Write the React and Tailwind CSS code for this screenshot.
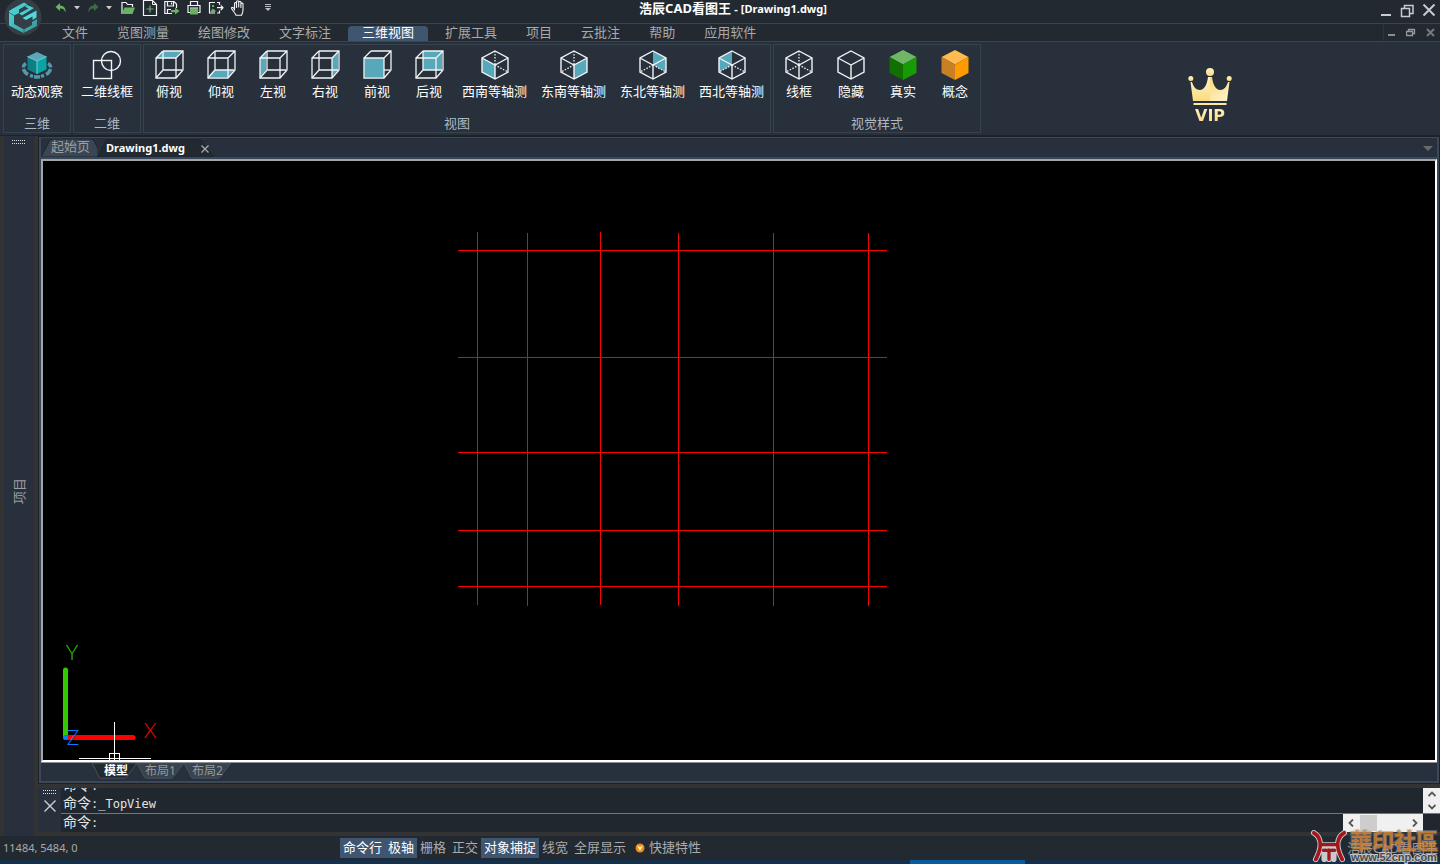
import React from 'react';

const WHITE = '#f2f4f5';
const TEAL = '#56a8ba';

/* ---------- ribbon icons ---------- */

const boxFaces = {
  top: 'M7 1H27L21 8H1Z',
  bottom: 'M7 20H27L21 27H1Z',
  left: 'M1 8L7 1V20L1 27Z',
  right: 'M21 8L27 1V20L21 27Z',
  front: 'M1 8H21V27H1Z',
  back: 'M8 1H27V20H8Z',
};

function BoxIcon({ face }) {
  return (
    <svg width="30" height="30" viewBox="-1 0 30 30" fill="none" stroke={WHITE} strokeWidth="1.3">
      <path d={boxFaces[face]} fill={TEAL} stroke="none" />
      {face !== 'front' && <path d="M8 1V20H27M8 20L1 28" />}
      {face === 'front' && <path d="M21 20H27" />}
      <path d="M8 1H28V20L21 28H1V8H21V28M1 8L8 1M21 8L28 1" />
    </svg>
  );
}

const isoFaces = {
  sw: 'M1 8L14 15V29L1 22Z',
  se: 'M27 8L14 15V29L27 22Z',
  ne: 'M14 1L27 8V22L14 15Z',
  nw: 'M14 1L1 8V22L14 15Z',
};

function IsoIcon({ face, hidden = true }) {
  return (
    <svg width="28" height="30" viewBox="0 0 28 30" fill="none" stroke={WHITE} strokeWidth="1.4">
      {face && <path d={isoFaces[face]} fill={TEAL} stroke="none" />}
      <path d="M14 1L27 8V22L14 29L1 22V8ZM1 8L14 15L27 8M14 15V29" />
      {hidden && (
        <g strokeDasharray="1.5 1.5" strokeWidth="1.3">
          {face !== 'ne' && face !== 'nw' && <path d="M14 1V15" />}
          {face !== 'sw' && <path d="M14 15L1 22" />}
          {face !== 'se' && <path d="M14 15L27 22" />}
        </g>
      )}
    </svg>
  );
}

function SolidCube({ top, left, right }) {
  return (
    <svg width="28" height="30" viewBox="0 0 28 30">
      <path d="M14 0L27.5 7L14 14.5L0.5 7Z" fill={top} />
      <path d="M0.5 7L14 14.5V30L0.5 23Z" fill={left} />
      <path d="M27.5 7L14 14.5V30L27.5 23Z" fill={right} />
    </svg>
  );
}

function OrbitIcon() {
  return (
    <svg width="32" height="30" viewBox="0 0 32 30">
      <g fill="none" stroke="#4f9aab" strokeWidth="3.4">
        <path d="M5 13.500C3 14.500 2.400 16 2.400 17.500" />
        <path d="M2.500 19C3 21 4.500 23 7 24.500" />
        <path d="M9 25.400L12 26.500" />
        <path d="M13 26.800C15 27.100 17 27.100 19 26.800" />
        <path d="M20 26.500L23 25.400" />
        <path d="M25 24.500C27.500 23 29 21 29.500 19" />
        <path d="M29.600 17.500C29.600 16 29 14.500 27 13.500" />
      </g>
      <path d="M16 2L25.500 6.500L16 11L6.500 6.500Z" fill="#5aa7b8" />
      <path d="M6.500 6.500L16 11V24L6.500 19.500Z" fill="#0c8084" />
      <path d="M25.500 6.500L16 11V24L25.500 19.500Z" fill="#0aa3a8" />
      <path d="M6.500 6.500L16 11L25.500 6.500M16 11V24" fill="none" stroke="#6fd6dd" strokeWidth="1" />
    </svg>
  );
}

function WireIcon() {
  return (
    <svg width="30" height="30" viewBox="0 0 30 30" fill="none" stroke={WHITE} strokeWidth="1.4">
      <rect x="1.500" y="10.500" width="18" height="18" />
      <circle cx="19" cy="11" r="9.500" />
    </svg>
  );
}

/* ---------- quick access icons ---------- */

function Caret({ color = '#c9cdd0' }) {
  return (
    <svg width="6" height="4" viewBox="0 0 6 4">
      <path d="M0 0H6L3 3.500Z" fill={color} />
    </svg>
  );
}

function UndoIcon() {
  return (
    <svg width="12" height="10" viewBox="0 0 12 10">
      <path d="M5 0L0.500 4L5 8V5.500C8 5.300 9.500 6.500 10.500 9.500C11 5.500 9 2.700 5 2.500Z" fill="#67b35f" />
    </svg>
  );
}

function RedoIcon() {
  return (
    <svg width="12" height="10" viewBox="0 0 12 10">
      <path d="M7 0L11.500 4L7 8V5.500C4 5.300 2.500 6.500 1.500 9.500C1 5.500 3 2.700 7 2.500Z" fill="#3f6b45" />
    </svg>
  );
}

function OpenIcon() {
  return (
    <svg width="16" height="16" viewBox="0 0 16 16">
      <path d="M2 14V2.500H6L7.500 4.500H12.500V7" fill="none" stroke={WHITE} strokeWidth="1.200" />
      <path d="M4.500 7.500H15L12.500 14H1.500Z" fill="#67b35f" />
    </svg>
  );
}

function NewIcon() {
  return (
    <svg width="16" height="16" viewBox="0 0 16 16" fill="none">
      <path d="M1.500 0.500H10.500L14.500 4.500V15.500H1.500Z" stroke={WHITE} strokeWidth="1.200" />
      <path d="M10.500 0.500V4.500H14.500" stroke={WHITE} strokeWidth="1" />
      <path d="M8 5.500V12.500M4.500 9H11.500" stroke="#67b35f" strokeWidth="1.200" />
    </svg>
  );
}

function SaveIcon() {
  return (
    <svg width="16" height="16" viewBox="0 0 16 16" fill="none">
      <path d="M8 13.500H0.800V1.500H10L12.500 4V8" stroke={WHITE} strokeWidth="1.200" />
      <path d="M3.500 1.500V6H9.500V1.500M7.500 2.500V4.500M3.500 13V9.500H7" stroke={WHITE} strokeWidth="1.200" />
      <path d="M7 10H11V7.500L15.500 11L11 14.500V12.300H7Z" fill="#67b35f" />
    </svg>
  );
}

function PrintIcon() {
  return (
    <svg width="14" height="16" viewBox="0 0 14 16">
      <path d="M3.500 5V1.500H10.500V5M3 12.500H1V5.500H13V12.500H11" fill="none" stroke={WHITE} strokeWidth="1.200" />
      <path d="M3 8.500H11V14.500H3Z" fill="#67b35f" />
      <path d="M3 8H11" stroke={WHITE} strokeWidth="1" />
    </svg>
  );
}

function ExportIcon() {
  return (
    <svg width="16" height="16" viewBox="0 0 16 16" fill="none">
      <path d="M7 2.500H1.500V13H7M9 2.500H11.500V5M11.500 10.500V13H9" stroke={WHITE} strokeWidth="1.200" />
      <path d="M2.500 12L4.500 8.500L7.500 10.500V12ZM4 5H6V7H4Z" fill="#67b35f" />
      <path d="M9 7.700H15M12.800 5.500L15 7.700L12.800 10" stroke={WHITE} strokeWidth="1.200" />
    </svg>
  );
}

function HandIcon() {
  return (
    <svg width="16" height="16" viewBox="0 0 16 16" fill="none" stroke={WHITE} strokeWidth="1.100" strokeLinejoin="round" strokeLinecap="round">
      <path d="M4.500 10V3.500C4.500 2.200 6.500 2.200 6.500 3.500V7.500M6.500 7V1.800C6.500 0.400 8.700 0.400 8.700 1.800V7M8.700 6.500V2.300C8.700 1 10.900 1 10.900 2.300V7.500M10.900 7V4C10.900 2.800 13 2.800 13 4V10C13 12.500 12 13.500 11.500 15.300H6C5.500 13.500 3 11 1.700 8.800C1 7.500 2.500 6.900 3.300 7.800L4.500 9.500" />
    </svg>
  );
}

function MoreIcon() {
  return (
    <svg width="6" height="8" viewBox="0 0 6 8">
      <path d="M0 0.500H6M0 2.500H6" stroke="#b9bdc0" strokeWidth="1" />
      <path d="M0 4H6L3 7Z" fill="#b9bdc0" />
    </svg>
  );
}

function Logo() {
  return (
    <svg width="38" height="38" viewBox="0 0 38 38">
      <defs>
        <linearGradient id="logoTeal" x1="0" y1="0" x2="1" y2="1">
          <stop offset="0" stopColor="#4ce0e2" />
          <stop offset="1" stopColor="#3b9196" />
        </linearGradient>
      </defs>
      <circle cx="19" cy="19" r="18.500" fill="#353d45" />
      <path d="M9 10.500L20 4.500L23.500 6.500L15 11.500V15L10 17.500V26L20 31.500L28 27V24L33 21V28L19.500 35L5 27.500V13Z" fill="url(#logoTeal)" />
      <path d="M23 7L30 10L18 17.500L15 15.500L24.500 10.500L21 8.500Z" fill="#43cfd3" />
      <path d="M32.500 12.500V19.500L28.500 22V18.500L22 22L18.500 20Z" fill="#4fdadb" />
      <path d="M10 17.500L5 14.500M20 31.500V35" stroke="#2b5f66" strokeWidth="0.800" />
    </svg>
  );
}

function CrownIcon() {
  return (
    <svg width="44" height="40" viewBox="0 0 44 40">
      <defs>
        <linearGradient id="goldL" x1="0" y1="0" x2="0" y2="1">
          <stop offset="0" stopColor="#fff3c8" />
          <stop offset="1" stopColor="#fadb7c" />
        </linearGradient>
        <linearGradient id="goldR" x1="0" y1="0" x2="0.600" y2="1">
          <stop offset="0" stopColor="#f8d877" />
          <stop offset="1" stopColor="#fff0c4" />
        </linearGradient>
      </defs>
      <circle cx="22" cy="5" r="4" fill="url(#goldL)" />
      <circle cx="2.800" cy="11.500" r="2.500" fill="url(#goldL)" />
      <circle cx="41.200" cy="11.500" r="2.500" fill="url(#goldL)" />
      <path d="M22 10H20C19 18 16 23 12 23C8 23 5.500 20 4 15H2.500L5 34H22Z" fill="url(#goldL)" />
      <path d="M22 10H24C25 18 28 23 32 23C36 23 38.500 20 40 15H41.500L39 34H22Z" fill="url(#goldR)" />
      <rect x="5.500" y="36" width="33" height="2" fill="#fde7a3" />
    </svg>
  );
}

/* ---------- data ---------- */

const menus = ['文件', '览图测量', '绘图修改', '文字标注', '三维视图', '扩展工具', '项目', '云批注', '帮助', '应用软件'];
const activeMenu = '三维视图';

const ribbonGroups = [
  { name: '三维', tools: [{ label: '动态观察', icon: <OrbitIcon /> }] },
  { name: '二维', tools: [{ label: '二维线框', icon: <WireIcon /> }] },
  {
    name: '视图',
    tools: [
      { label: '俯视', icon: <BoxIcon face="top" /> },
      { label: '仰视', icon: <BoxIcon face="bottom" /> },
      { label: '左视', icon: <BoxIcon face="left" /> },
      { label: '右视', icon: <BoxIcon face="right" /> },
      { label: '前视', icon: <BoxIcon face="front" /> },
      { label: '后视', icon: <BoxIcon face="back" /> },
      { label: '西南等轴测', icon: <IsoIcon face="sw" /> },
      { label: '东南等轴测', icon: <IsoIcon face="se" /> },
      { label: '东北等轴测', icon: <IsoIcon face="ne" /> },
      { label: '西北等轴测', icon: <IsoIcon face="nw" /> },
    ],
  },
  {
    name: '视觉样式',
    tools: [
      { label: '线框', icon: <IsoIcon /> },
      { label: '隐藏', icon: <IsoIcon hidden={false} /> },
      { label: '真实', icon: <SolidCube top="#6fb766" left="#127000" right="#189a04" /> },
      { label: '概念', icon: <SolidCube top="#ffbb50" left="#c88024" right="#ff9a00" /> },
    ],
  },
];

const gridColumns = [
  [477, 232, 605],
  [527, 233, 606],
  [600, 232, 605],
  [678, 233, 606],
  [773, 233, 606],
  [868, 233, 606],
];
const gridRows = [250, 357, 452, 530, 586];

const statusToggles = [
  { label: '命令行', on: true },
  { label: '极轴', on: true },
  { label: '栅格' },
  { label: '正交' },
  { label: '对象捕捉', on: true },
  { label: '线宽' },
  { label: '全屏显示' },
];

/* ---------- sections ---------- */

function QuickButton({ label, className, children }) {
  return (
    <button type="button" aria-label={label} className={`flex h-4 shrink-0 items-center justify-center ${className}`}>
      {children}
    </button>
  );
}

function TitleBar() {
  return (
    <header className="grid h-6 shrink-0 grid-cols-[1fr_auto_1fr] border-b border-[#39444f] bg-[#222930]">
      <div className="flex items-start pl-[53px]">
        <QuickButton label="撤销" className="w-4"><UndoIcon /></QuickButton>
        <QuickButton label="撤销列表" className="w-4"><Caret /></QuickButton>
        <QuickButton label="重做" className="w-4"><RedoIcon /></QuickButton>
        <QuickButton label="重做列表" className="w-4"><Caret /></QuickButton>
        <QuickButton label="打开" className="w-[22px]"><OpenIcon /></QuickButton>
        <QuickButton label="新建" className="w-[22px]"><NewIcon /></QuickButton>
        <QuickButton label="另存为" className="w-[22px]"><SaveIcon /></QuickButton>
        <QuickButton label="打印" className="w-[22px]"><PrintIcon /></QuickButton>
        <QuickButton label="输出" className="w-[22px]"><ExportIcon /></QuickButton>
        <QuickButton label="平移" className="w-[22px]"><HandIcon /></QuickButton>
        <QuickButton label="自定义" className="ml-2 w-[22px]"><MoreIcon /></QuickButton>
      </div>
      <h1 className="pl-[26px] text-[13px] leading-4 font-bold whitespace-nowrap text-white">
        浩辰CAD看图王 <span className="text-[11px] leading-4">- [Drawing1.dwg]</span>
      </h1>
      <div className="flex items-start justify-end gap-2 pt-1 pr-1 text-[#c9cccd]">
        <button type="button" aria-label="最小化">
          <svg width="13" height="14" viewBox="0 0 13 14"><path d="M2 11H12" stroke="currentColor" strokeWidth="2" /></svg>
        </button>
        <button type="button" aria-label="还原">
          <svg width="14" height="14" viewBox="0 0 14 14" fill="none" stroke="currentColor" strokeWidth="1.500"><path d="M1.500 4.500H9.500V12.500H1.500ZM4.500 4V1.500H13V9.500H10" /></svg>
        </button>
        <button type="button" aria-label="关闭">
          <svg width="14" height="14" viewBox="0 0 14 14"><path d="M1.500 0.500L12.500 11.500M12.500 0.500L1.500 11.500" stroke="currentColor" strokeWidth="2" /></svg>
        </button>
      </div>
    </header>
  );
}

function MenuBar() {
  return (
    <nav className="flex h-[18px] shrink-0 items-end border-b border-[#39444f] bg-[#222930] pl-12">
      <div className="flex gap-px">
        {menus.map((name) => (
          <button
            key={name}
            type="button"
            className={`flex h-[15px] items-start px-[14px] text-[13px] leading-[13px] whitespace-nowrap ${
              name === activeMenu ? 'mx-0.5 rounded-t-sm bg-[#3f5570] text-white' : 'text-[#a9aaab]'
            }`}
          >
            {name}
          </button>
        ))}
      </div>
      <div className="ml-auto flex h-[18px] items-center gap-2.5 border-l border-[#2c3540] pr-[5px] pl-1 text-[#989b9d]">
        <button type="button" aria-label="最小化图纸">
          <svg width="8" height="9" viewBox="0 0 8 9"><path d="M0 7H7" stroke="currentColor" strokeWidth="1.800" /></svg>
        </button>
        <button type="button" aria-label="还原图纸">
          <svg width="10" height="9" viewBox="0 0 10 9" fill="none" stroke="currentColor"><path d="M0.500 3.500H6.500V7.500H0.500ZM2.500 3V1.500H8.500V5.500H7" strokeWidth="1.300" /></svg>
        </button>
        <button type="button" aria-label="关闭图纸">
          <svg width="9" height="9" viewBox="0 0 9 9"><path d="M1 1L8 8M8 1L1 8" stroke="#77797b" strokeWidth="2" /></svg>
        </button>
      </div>
    </nav>
  );
}

function Ribbon() {
  return (
    <section className="flex h-[94px] shrink-0 gap-0.5 border-b border-[#1d2329] bg-[#28303b] px-[3px] pt-0.5 pb-0.5">
      {ribbonGroups.map((group) => (
        <section
          key={group.name}
          aria-label={group.name}
          className="flex h-[89px] min-w-[68px] shrink-0 flex-col items-center justify-between pb-px inset-ring inset-ring-[#36424e]"
        >
          <div className="flex">
            {group.tools.map((tool) => (
              <button key={tool.label} type="button" className="flex min-w-[52px] flex-col items-center gap-[3px] px-[7px] pt-1.5">
                <span className="flex h-[30px] items-center">{tool.icon}</span>
                <span className="text-[13px] leading-4 whitespace-nowrap text-white">{tool.label}</span>
              </button>
            ))}
          </div>
          <h2 className="text-[13px] leading-[18px] text-[#adb9c4]">{group.name}</h2>
        </section>
      ))}
      <div className="flex flex-1 justify-center pt-[23px]">
        <button type="button" className="flex flex-col items-center">
          <CrownIcon />
          <span className="bg-linear-to-b from-[#fff1c0] to-[#f9d87a] bg-clip-text font-['DejaVu_Sans',sans-serif] text-base leading-[18px] font-bold text-transparent">
            VIP
          </span>
        </button>
      </div>
    </section>
  );
}

function Grip() {
  return (
    <svg width="14" height="5" viewBox="0 0 14 5" shapeRendering="crispEdges">
      <path d="M0 0.500H13M0 3.500H13" stroke="#dfe2e4" strokeDasharray="1 1" />
    </svg>
  );
}

function ProjectPanel() {
  return (
    <aside className="flex w-[38px] shrink-0 flex-col items-center border-x-4 border-[#333333] bg-[#28303d] pt-1">
      <Grip />
      <div className="flex flex-1 items-center">
        <button type="button" className="-rotate-90 text-[13px] leading-4 whitespace-nowrap text-[#9c9ea0]">
          项目
        </button>
      </div>
    </aside>
  );
}

function TabShape({ d, fill, stroke }) {
  return (
    <svg className="absolute inset-0 h-full w-full" viewBox="0 0 100 20" preserveAspectRatio="none" aria-hidden="true">
      <path d={d} fill={fill} stroke={stroke} vectorEffect="non-scaling-stroke" />
    </svg>
  );
}

function DocumentTabs() {
  return (
    <div className="flex h-[21px] items-end border-b-2 border-[#39475a] bg-[#28303d]" role="tablist">
      <button type="button" role="tab" aria-selected="false" className="relative flex h-[18px] items-start pr-2 pl-2.5 text-[13px] leading-[14px] text-[#9d9fa2]">
        <TabShape d="M0 20L14 3Q16 0 20 0H88Q92 0 94 3L100 11V20Z" fill="#3a4653" stroke="#1f262c" />
        <span className="relative">起始页</span>
      </button>
      <div className="relative flex h-[18px] items-center gap-4 pr-[5px] pl-2">
        <TabShape d="M0 20L6 3Q7 0 10 0H84Q88 0 90 3L100 20Z" fill="#222930" stroke="#1f262c" />
        <button type="button" role="tab" aria-selected="true" className="relative text-[11px] leading-4 font-bold text-white">
          Drawing1.dwg
        </button>
        <button type="button" aria-label="关闭 Drawing1.dwg" className="relative pt-px">
          <svg width="8" height="8" viewBox="0 0 8 8"><path d="M0.500 0.500L7.500 7.500M7.500 0.500L0.500 7.500" stroke="#a5a8aa" strokeWidth="1.400" /></svg>
        </button>
      </div>
      <button type="button" aria-label="图纸列表" className="mr-1 mb-1.5 ml-auto">
        <svg width="10" height="5" viewBox="0 0 10 5"><path d="M0 0H10L5 5Z" fill="#6a6a6b" /></svg>
      </button>
    </div>
  );
}

function DrawingCanvas() {
  return (
    <div className="relative min-h-0 flex-1 overflow-hidden border-2 border-t-[#a3a6a8] border-r-white border-b-white border-l-[#a3a6a8] bg-black">
      <svg className="absolute top-0 left-0" width="860" height="460" viewBox="43 161 860 460" shapeRendering="crispEdges">
        <g stroke="#ff0000" strokeWidth="1">
          {gridColumns.map(([x, y1, y2]) => (
            <line key={x} x1={x + 0.5} x2={x + 0.5} y1={y1} y2={y2} />
          ))}
          {gridRows.map((y) => (
            <line key={y} x1="458" x2="887" y1={y + 0.5} y2={y + 0.5} />
          ))}
        </g>
      </svg>
      <svg className="absolute bottom-0 left-0" width="140" height="130" viewBox="43 630 140 130">
        <g fontFamily="Lato, sans-serif" fontWeight="300" fontSize="21" textAnchor="middle">
          <text x="72" y="660" fill="#33c800">Y</text>
          <text x="150" y="738" fill="#ff0000">X</text>
        </g>
        <path d="M65.500 737V670" stroke="#33c800" strokeWidth="5" strokeLinecap="round" />
        <path d="M66 737.500H133" stroke="#ff0000" strokeWidth="5" strokeLinecap="round" />
        <circle cx="65.500" cy="737.500" r="2.500" fill="#0a7cff" />
        <text x="73" y="745" fill="#0a7cff" fontFamily="Lato, sans-serif" fontWeight="300" fontSize="21" textAnchor="middle">Z</text>
        <path d="M114.500 722V760M79 758.500H151M109.500 760V753.500H119.500V760" fill="none" stroke="#ffffff" strokeWidth="1" shapeRendering="crispEdges" />
      </svg>
    </div>
  );
}

function LayoutTabs() {
  const shape = 'M0 0L16 18Q17 19 20 19H72Q76 19 78 17L100 0Z';
  return (
    <div className="flex h-[19px] items-start border-t border-[#8a8e92] bg-[#28303d] pl-[51px]" role="tablist">
      <button type="button" role="tab" aria-selected="true" className="relative h-4 pr-[9px] pl-3 text-xs leading-4 font-bold text-white">
        <TabShape d={shape} fill="#222930" stroke="#46525d" />
        <span className="relative">模型</span>
      </button>
      {['布局1', '布局2'].map((name) => (
        <button key={name} type="button" role="tab" aria-selected="false" className="relative h-4 px-2 text-xs leading-4 text-[#98999b]">
          <TabShape d={shape} fill="#37434e" stroke="#46525d" />
          <span className="relative">{name}</span>
        </button>
      ))}
    </div>
  );
}

function Chevron({ d }) {
  return (
    <svg width="8" height="8" viewBox="0 0 8 8">
      <path d={d} fill="none" stroke="#555555" strokeWidth="1.800" />
    </svg>
  );
}

function CommandPanel() {
  return (
    <section className="flex h-11 shrink-0 bg-[#20272e]" aria-label="命令行">
      <div className="flex w-[23px] shrink-0 flex-col items-center gap-[5px] bg-[#28303b] pt-0.5">
        <Grip />
        <button type="button" aria-label="关闭命令行">
          <svg width="12" height="12" viewBox="0 0 12 12"><path d="M0.500 0.500L11.500 11.500M11.500 0.500L0.500 11.500" stroke="#cfd2d4" strokeWidth="1.400" /></svg>
        </button>
      </div>
      <div className="flex min-w-0 flex-1 flex-col">
        <div className="flex h-[26px] shrink-0 border-b border-[#747677]">
          <div className="flex flex-1 flex-col justify-end overflow-hidden pl-0.5 font-['DejaVu_Sans_Mono','Noto_Sans_CJK_SC',monospace] text-xs text-[#e3e4e5]">
            <p className="shrink-0 leading-[17px]"><span className="text-sm leading-[17px]">命令</span>:</p>
            <p className="shrink-0 leading-[17px]"><span className="text-sm leading-[17px]">命令</span>:_TopView</p>
          </div>
          <div className="flex w-[17px] flex-col items-center justify-between bg-[#f0f0f0] py-0.5">
            <button type="button" aria-label="向上滚动"><Chevron d="M0.500 6L4 2.500L7.500 6" /></button>
            <button type="button" aria-label="向下滚动"><Chevron d="M0.500 2L4 5.500L7.500 2" /></button>
          </div>
        </div>
        <div className="flex flex-1 items-stretch pr-[17px]">
          <label htmlFor="command" className="pl-0.5 font-['DejaVu_Sans_Mono','Noto_Sans_CJK_SC',monospace] text-xs leading-[17px] text-[#e3e4e5]">
            <span className="text-sm leading-[17px]">命令</span>:
          </label>
          <input id="command" type="text" className="min-w-0 flex-1 bg-transparent px-1 font-['DejaVu_Sans_Mono',monospace] text-xs text-[#e3e4e5] outline-none" />
          <div className="flex w-20 items-center justify-between bg-[#f0f0f0] px-1">
            <button type="button" aria-label="向左滚动"><Chevron d="M6 0.500L2.500 4L6 7.500" /></button>
            <span className="mr-auto ml-[5px] h-4 w-[17px] bg-[#cdcdcd]" />
            <button type="button" aria-label="向右滚动"><Chevron d="M2 0.500L5.500 4L2 7.500" /></button>
          </div>
        </div>
      </div>
    </section>
  );
}

function StatusBar() {
  return (
    <footer className="flex h-6 shrink-0 items-center bg-[#222930] text-[13px] leading-[18px] text-[#a9abad]">
      <output className="w-[340px] shrink-0 pl-[3px] text-[11px] leading-[18px]">11484, 5484, 0</output>
      {statusToggles.map((t) => (
        <button
          key={t.label}
          type="button"
          aria-pressed={Boolean(t.on)}
          className={`flex h-5 items-start px-[3px] leading-[18px] whitespace-nowrap ${t.on ? 'bg-[#3f5570] text-white' : ''}`}
        >
          {t.label}
        </button>
      ))}
      <button type="button" className="flex h-5 items-start gap-1 pl-1.5 leading-[18px] whitespace-nowrap">
        <svg className="mt-[5px]" width="10" height="10" viewBox="0 0 10 10">
          <circle cx="5" cy="5" r="4.500" fill="#f08a12" />
          <path d="M2 2.500L5 8L8 2.500L5 4Z" fill="#fff4d8" />
        </svg>
        快捷特性
      </button>
      <span className="ml-auto pr-0.5 text-[#9a9ea2]">浩辰CAD看图王</span>
    </footer>
  );
}

function Watermark() {
  return (
    <div className="pointer-events-none absolute right-0 bottom-0 flex items-center gap-[3px] pr-0.5">
      <svg width="36" height="34" viewBox="0 0 38 36">
        <g fill="none" strokeLinecap="round" strokeLinejoin="round">
          <path
            d="M3 3C11 8 12 18 5 31M35 3C27 8 26 18 33 31M10 16H28M14 22V31M24 22V31M19 17V31"
            stroke="#c9cacb"
            strokeWidth="6"
          />
          <path d="M3 3C11 8 12 18 5 31M35 3C27 8 26 18 33 31" stroke="#a3161b" strokeWidth="4" />
          <path d="M10 15.500H28M13 21.500H25M19 21V31" stroke="#a3161b" strokeWidth="3.500" />
        </g>
      </svg>
      <div className="flex flex-col items-center font-bold whitespace-nowrap">
        <span className="font-['Noto_Sans_CJK_TC',sans-serif] text-[22px] leading-[21px] text-[#d9862c]/80 [paint-order:stroke] [-webkit-text-stroke:2px_#8a8d9080]">
          華印社區
        </span>
        <span className="font-['Liberation_Sans',sans-serif] text-[11px] leading-[14px] text-[#4a4a4a] [paint-order:stroke] [-webkit-text-stroke:2px_#c4c6c8]">
          www.52cnp.com
        </span>
      </div>
    </div>
  );
}

export default function App() {
  return (
    <div className="relative flex h-screen flex-col overflow-hidden bg-[#333333] font-['Noto_Sans','Noto_Sans_CJK_SC',sans-serif]">
      <TitleBar />
      <MenuBar />
      <Ribbon />
      <button type="button" aria-label="应用程序菜单" className="absolute -top-0.5 left-1">
        <Logo />
      </button>
      <main className="flex min-h-0 flex-1">
        <ProjectPanel />
        <div className="flex min-w-0 flex-1 flex-col pb-1">
          <div className="flex min-h-0 flex-1 flex-col border border-[#1c2228] bg-[#3c4858]">
            <div className="flex min-h-0 flex-1 flex-col px-0.5 pt-px pb-0.5">
              <DocumentTabs />
              <DrawingCanvas />
              <LayoutTabs />
            </div>
          </div>
          <div className="h-1 shrink-0" />
          <CommandPanel />
        </div>
      </main>
      <StatusBar />
      <div className="flex h-1 shrink-0 bg-[#15304c]">
        <div className="ml-[910px] w-[115px] bg-[#0a5a9e]" />
      </div>
      <Watermark />
    </div>
  );
}
